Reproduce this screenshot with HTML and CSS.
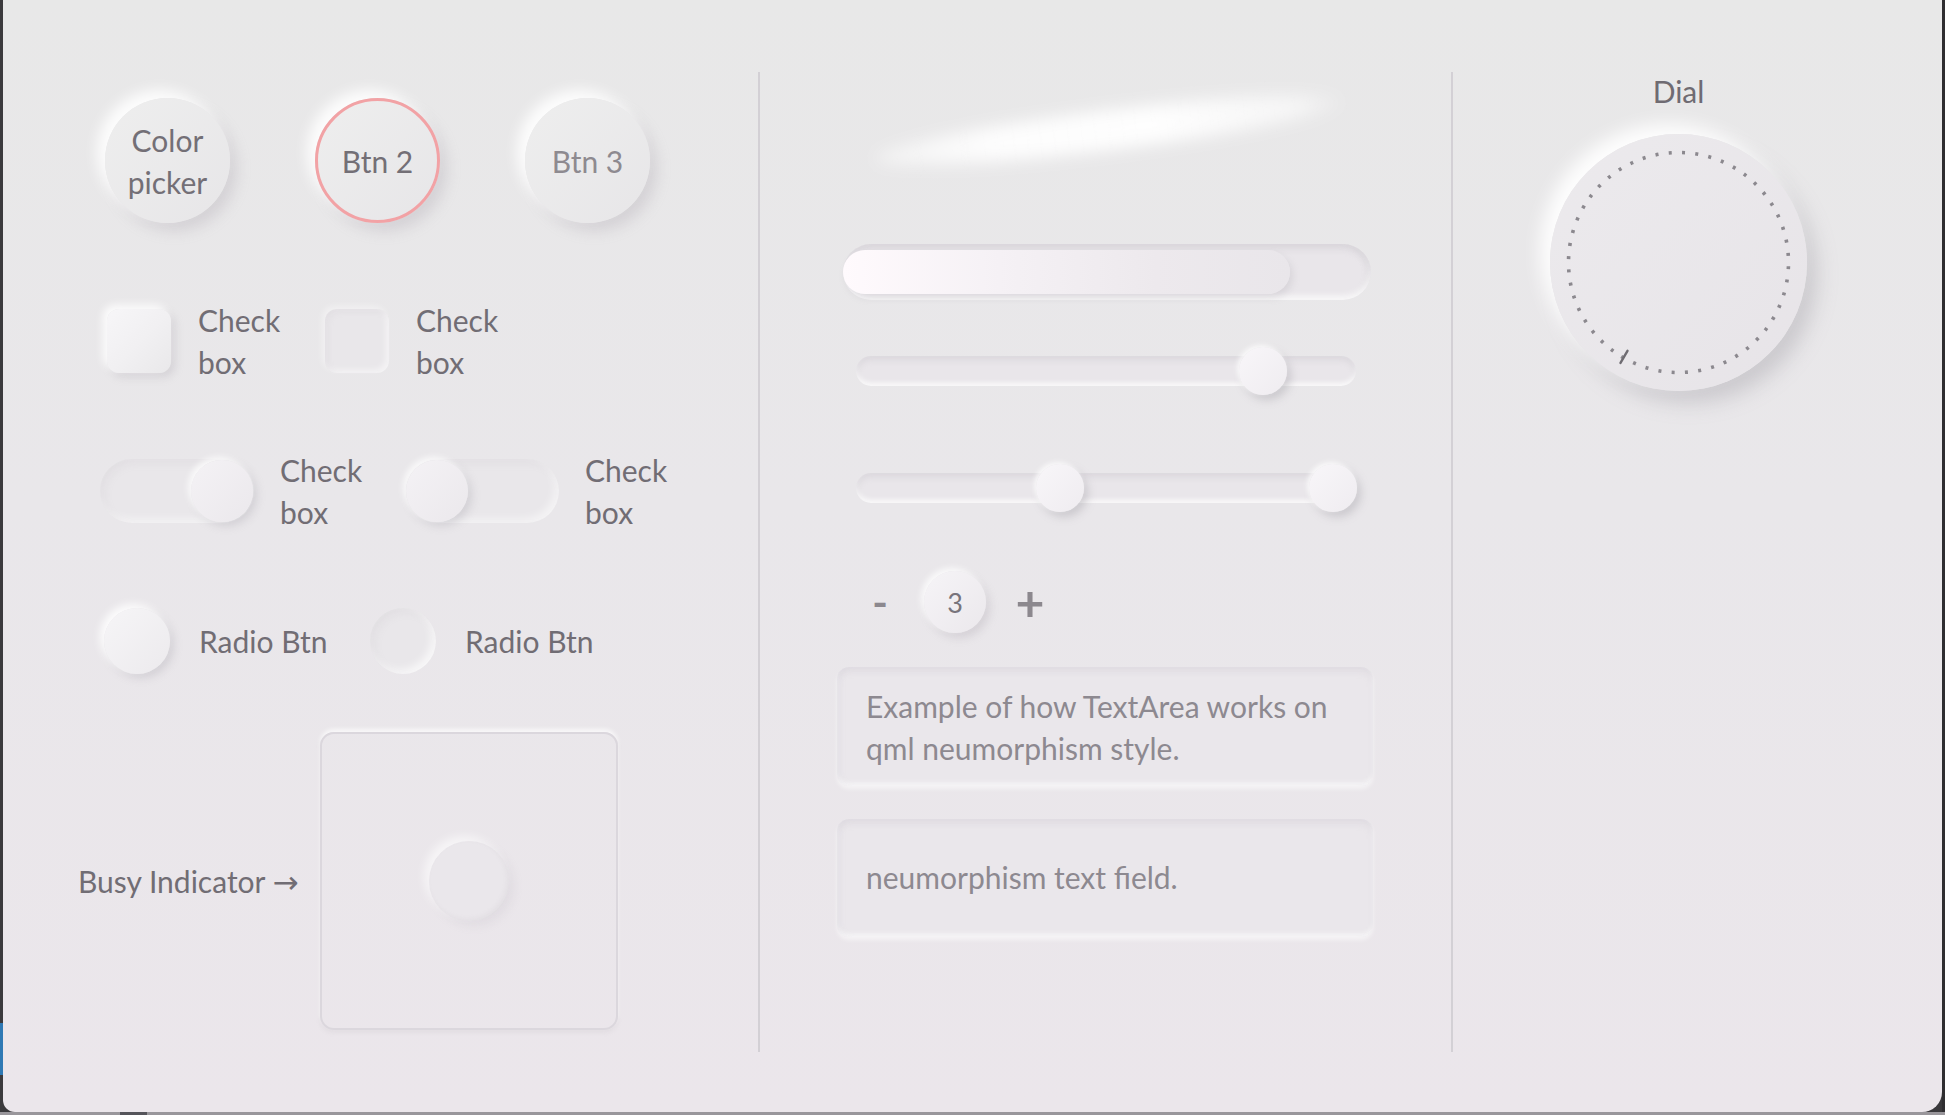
FILE: index.html
```html
<!DOCTYPE html>
<html lang="en">
<head>
<meta charset="utf-8">
<title>Neumorphism QML style</title>
<link rel="stylesheet" href="styles.css">
</head>
<body>
<div class="frame">
  <div class="edge-left"><div class="edge-blue"></div></div>
  <div class="window">
    <section class="col col-left">
      <div class="row-buttons">
        <div class="nbtn"><span class="nbtn-text">Color<br>picker</span></div>
        <div class="nbtn nbtn-focus"><span class="nbtn-text">Btn 2</span></div>
        <div class="nbtn nbtn-dim"><span class="nbtn-text">Btn 3</span></div>
      </div>

      <div class="row row-checks">
        <div class="grp grp-check">
          <div class="checkbox checked"></div>
          <span class="lbl lbl-wrap">Check box</span>
        </div>
        <div class="grp grp-check">
          <div class="checkbox"></div>
          <span class="lbl lbl-wrap">Check box</span>
        </div>
      </div>

      <div class="row row-switches">
        <div class="grp grp-switch">
          <div class="switch on"><div class="knob"></div></div>
          <span class="lbl lbl-wrap">Check box</span>
        </div>
        <div class="grp grp-switch">
          <div class="switch"><div class="knob"></div></div>
          <span class="lbl lbl-wrap">Check box</span>
        </div>
      </div>

      <div class="row row-radios">
        <div class="grp grp-radio">
          <div class="radio checked"></div>
          <span class="lbl">Radio Btn</span>
        </div>
        <div class="grp grp-radio">
          <div class="radio"></div>
          <span class="lbl">Radio Btn</span>
        </div>
      </div>

      <div class="row row-busy">
        <span class="lbl busy-lbl">Busy Indicator <span class="arrow">→</span></span>
        <div class="busy-box">
          <div class="busy-ring"></div>
        </div>
      </div>
    </section>

    <div class="divider"></div>

    <section class="col col-mid">
      <div class="streak-area"><div class="streak"></div></div>

      <div class="progress">
        <div class="progress-fill"></div>
      </div>

      <div class="slider">
        <div class="track"></div>
        <div class="handle handle-a"></div>
      </div>

      <div class="slider slider-range">
        <div class="track"></div>
        <div class="handle handle-b"></div>
        <div class="handle handle-c"></div>
      </div>

      <div class="spin">
        <span class="spin-btn spin-minus">-</span>
        <div class="spin-value">3</div>
        <span class="spin-btn spin-plus">+</span>
      </div>

      <div class="textarea">Example of how TextArea works on<br>qml neumorphism style.</div>

      <div class="textfield">neumorphism text field.</div>
    </section>

    <div class="divider"></div>

    <section class="col col-right">
      <div class="dial-title">Dial</div>
      <div class="dial">
        <svg class="dial-svg" width="257" height="257" viewBox="0 0 257 257">
          <circle class="dial-dots" cx="128.5" cy="128.5" r="110" transform="rotate(126.3 128.5 128.5)"></circle>
          <line class="dial-handle" x1="77.5" y1="216.8" x2="70.5" y2="228.9"></line>
        </svg>
      </div>
    </section>
  </div>
  <div class="edge-right"></div>
</div>
<div class="bottom-bar"><div class="bottom-dark"></div></div>
</body>
</html>
```

FILE: styles.css
```css
html, body {
  margin: 0;
  padding: 0;
}

body {
  width: 1945px;
  height: 1115px;
  overflow: hidden;
  background: #9b989d;
  font-family: Lato, "Noto Sans", sans-serif;
  color: #716d74;
}

.frame {
  display: flex;
  height: 1112px;
  background: #3a393c;
}

.edge-left {
  width: 3px;
  background: #3b3a3d;
  display: flex;
  flex-direction: column;
  padding-top: 1023px;
  box-sizing: border-box;
}

.edge-blue {
  height: 52px;
  background: #2f79b4;
}

.edge-right {
  width: 3px;
  background: #2f2e31;
}

.window {
  flex: 1;
  display: flex;
  background: linear-gradient(180deg, #e8e8e8 0%, #e9e7ea 45%, #ebe6eb 100%);
  border-bottom-left-radius: 12px;
  border-bottom-right-radius: 20px;
  overflow: hidden;
}

.bottom-bar {
  height: 3px;
  background: #99969b;
  display: flex;
  padding-left: 120px;
}

.bottom-dark {
  width: 27px;
  background: #55545a;
}

/* columns */
.col {
  display: flex;
  flex-direction: column;
}

.col-left { width: 755px; }
.col-mid { width: 691px; }
.col-right { flex: 1; }

.divider {
  width: 2px;
  height: 980px;
  margin-top: 72px;
  background: #d3d0d5;
  flex: none;
}

/* labels */
.lbl {
  font-size: 30px;
  line-height: 42px;
  color: #716d74;
  white-space: nowrap;
}

.lbl-wrap {
  white-space: normal;
  width: min-content;
}

/* round buttons */
.row-buttons {
  display: flex;
  gap: 85px;
  margin-top: 98px;
  padding-left: 102px;
}

.nbtn {
  width: 125px;
  height: 125px;
  border-radius: 50%;
  box-sizing: border-box;
  background: linear-gradient(135deg, #eeeeee, #e7e6e8);
  box-shadow: -8px -8px 14px rgba(255, 255, 255, 0.9), 7px 8px 14px rgba(160, 156, 166, 0.28);
  display: flex;
  align-items: center;
  justify-content: center;
  text-align: center;
}

.nbtn-text {
  font-size: 30px;
  line-height: 42px;
  color: #736f76;
}

.nbtn-focus {
  border: 3px solid #f2a2a5;
}

.nbtn-dim .nbtn-text {
  color: #8e8a90;
}

/* generic rows */
.row {
  display: flex;
  align-items: center;
}

.grp {
  display: flex;
  align-items: center;
  flex: none;
}

/* checkboxes */
.row-checks {
  margin-top: 76px;
  height: 84px;
  padding-left: 104px;
}

.grp-check { width: 218px; gap: 27px; }

.checkbox {
  width: 64px;
  height: 64px;
  border-radius: 12px;
  flex: none;
  background: #e9e7ea;
  box-shadow: inset 3px 3px 6px rgba(165, 160, 170, 0.09), inset -3px -3px 6px rgba(255, 255, 255, 0.55), -3px -3px 6px rgba(255, 255, 255, 0.4);
}

.checkbox.checked {
  background: linear-gradient(135deg, #f7f6f8 0%, #f1f0f2 50%, #e9e8ea 100%);
  box-shadow: -4px -4px 8px rgba(255, 255, 255, 0.9), 4px 4px 8px rgba(160, 156, 166, 0.28);
}

/* switches */
.row-switches {
  margin-top: 66px;
  height: 84px;
  padding-left: 97px;
}

.grp-switch { width: 305px; gap: 26px; }

.switch {
  width: 154px;
  height: 64px;
  border-radius: 32px;
  flex: none;
  box-sizing: border-box;
  padding: 1px;
  display: flex;
  justify-content: flex-start;
  background: #e9e7ea;
  box-shadow: inset 4px 4px 8px rgba(165, 160, 170, 0.1), inset -4px -4px 8px rgba(255, 255, 255, 0.55);
}

.switch.on { justify-content: flex-end; }

.knob {
  width: 62px;
  height: 62px;
  border-radius: 50%;
  background: linear-gradient(135deg, #f4f2f5, #ebe8ec);
  box-shadow: -3px -3px 6px rgba(255, 255, 255, 0.8), 4px 4px 8px rgba(160, 156, 166, 0.3);
}

/* radios */
.row-radios {
  margin-top: 75px;
  height: 66px;
  padding-left: 101px;
}

.grp-radio { width: 266px; gap: 29px; }

.radio {
  width: 66px;
  height: 66px;
  border-radius: 50%;
  flex: none;
  background: #e9e7ea;
  box-shadow: inset 4px 4px 8px rgba(165, 160, 170, 0.1), inset -4px -4px 8px rgba(255, 255, 255, 0.7);
}

.radio.checked {
  background: linear-gradient(135deg, #f6f5f7, #eceaed);
  box-shadow: -4px -4px 8px rgba(255, 255, 255, 0.9), 4px 4px 8px rgba(160, 156, 166, 0.3);
}

/* busy indicator */
.row-busy {
  margin-top: 58px;
  padding-left: 75px;
}

.busy-lbl {
  width: 242px;
  flex: none;
}

.arrow {
  font-family: "DejaVu Sans", sans-serif;
  font-size: 31px;
}

.busy-box {
  width: 298px;
  height: 298px;
  box-sizing: border-box;
  border: 2px solid #dbd7dd;
  border-radius: 14px;
  display: flex;
  align-items: center;
  justify-content: center;
  box-shadow: 0 -3px 4px rgba(255, 255, 255, 0.7), 0 3px 4px rgba(170, 165, 175, 0.12);
}

.busy-ring {
  width: 80px;
  height: 80px;
  border-radius: 50%;
  background: #eae7eb;
  box-shadow: -5px -5px 10px rgba(255, 255, 255, 0.6), 5px 5px 10px rgba(170, 165, 175, 0.14), inset -2px -2px 4px rgba(180, 175, 185, 0.12);
}

/* middle column */
.streak-area {
  height: 170px;
  display: flex;
  flex-direction: column;
}

.streak {
  width: 470px;
  height: 40px;
  margin-top: 110px;
  margin-left: 114px;
  border-radius: 50%;
  transform: rotate(-7deg);
  background: linear-gradient(90deg, rgba(255, 255, 255, 0.45) 0%, rgba(255, 255, 255, 0.9) 25%, rgba(255, 255, 255, 0.95) 60%, rgba(255, 255, 255, 0.6) 90%, rgba(255, 255, 255, 0.1) 100%);
  filter: blur(8px);
}

.progress {
  margin-top: 74px;
  margin-left: 83px;
  width: 528px;
  height: 56px;
  border-radius: 28px;
  display: flex;
  align-items: center;
  background: #e9e6ea;
  box-shadow: inset 0 5px 7px rgba(165, 160, 170, 0.2), inset 0 -4px 6px rgba(255, 255, 255, 0.8), inset -4px 0 6px rgba(165, 160, 170, 0.08);
}

.progress-fill {
  width: 447px;
  height: 44px;
  border-radius: 22px;
  background: linear-gradient(90deg, #fffafd 0%, #f5f1f5 35%, #ede9ed 70%, #e9e6ea 100%);
  box-shadow: 3px 4px 7px rgba(160, 156, 166, 0.22);
}

.slider {
  position: relative;
  margin-left: 96px;
  width: 500px;
  height: 48px;
  display: flex;
  align-items: center;
  margin-top: 47px;
}

.slider-range { margin-top: 69px; }

.track {
  width: 100%;
  height: 30px;
  border-radius: 15px;
  background: #e9e6ea;
  box-shadow: inset 0 4px 6px rgba(165, 160, 170, 0.2), inset 0 -3px 5px rgba(255, 255, 255, 0.85);
}

.handle {
  position: absolute;
  top: 0;
  width: 48px;
  height: 48px;
  border-radius: 50%;
  background: linear-gradient(135deg, #f8f6f9, #efecf0);
  box-shadow: -2px -2px 5px rgba(255, 255, 255, 0.8), 4px 5px 8px rgba(150, 146, 156, 0.35);
}

.handle-a { left: 383px; }
.handle-b { left: 180px; }
.handle-c { left: 453px; }

.spin {
  margin-top: 59px;
  margin-left: 95px;
  height: 62px;
  display: flex;
  align-items: center;
}

.spin-btn {
  width: 50px;
  text-align: center;
  color: #8c888e;
  font-weight: 700;
  line-height: 62px;
}

.spin-minus { font-size: 42px; }
.spin-plus { font-size: 50px; }

.spin-value {
  width: 62px;
  height: 62px;
  margin: 0 19px;
  border-radius: 50%;
  display: flex;
  align-items: center;
  justify-content: center;
  font-size: 27px;
  color: #78747b;
  background: linear-gradient(135deg, #f6f4f7, #ebe8ec);
  box-shadow: -3px -3px 6px rgba(255, 255, 255, 0.8), 4px 5px 8px rgba(160, 156, 166, 0.28);
}

.textarea,
.textfield {
  margin-left: 77px;
  width: 536px;
  box-sizing: border-box;
  padding-left: 29px;
  border-radius: 12px;
  font-size: 30px;
  line-height: 42px;
  color: #8d8990;
  background: #eae7eb;
  box-shadow: inset 0 5px 7px rgba(165, 160, 170, 0.12), inset 4px 0 6px rgba(165, 160, 170, 0.05), inset 0 -3px 5px rgba(255, 255, 255, 0.7), 0 3px 4px rgba(255, 255, 255, 0.5);
}

.textarea {
  margin-top: 34px;
  height: 119px;
  padding-top: 18px;
}

.textfield {
  margin-top: 33px;
  height: 118px;
  padding-top: 37px;
}

/* right column */
.col-right {
  padding-left: 97px;
  align-items: flex-start;
}

.dial-title {
  width: 257px;
  margin-top: 70px;
  text-align: center;
  font-size: 30px;
  line-height: 42px;
  color: #6f6b72;
}

.dial {
  margin-top: 22px;
  width: 257px;
  height: 257px;
  border-radius: 50%;
  background: linear-gradient(135deg, #eceaed, #e7e4e8);
  box-shadow: -10px -10px 18px rgba(255, 255, 255, 0.95), 10px 12px 20px rgba(150, 146, 156, 0.35);
}

.dial-svg { display: block; }

.dial-dots {
  fill: none;
  stroke: #8b888e;
  stroke-width: 3.6;
  stroke-dasharray: 3 10.291;
}

.dial-handle {
  stroke: #6f6c72;
  stroke-width: 2.4;
  stroke-linecap: round;
}
```
